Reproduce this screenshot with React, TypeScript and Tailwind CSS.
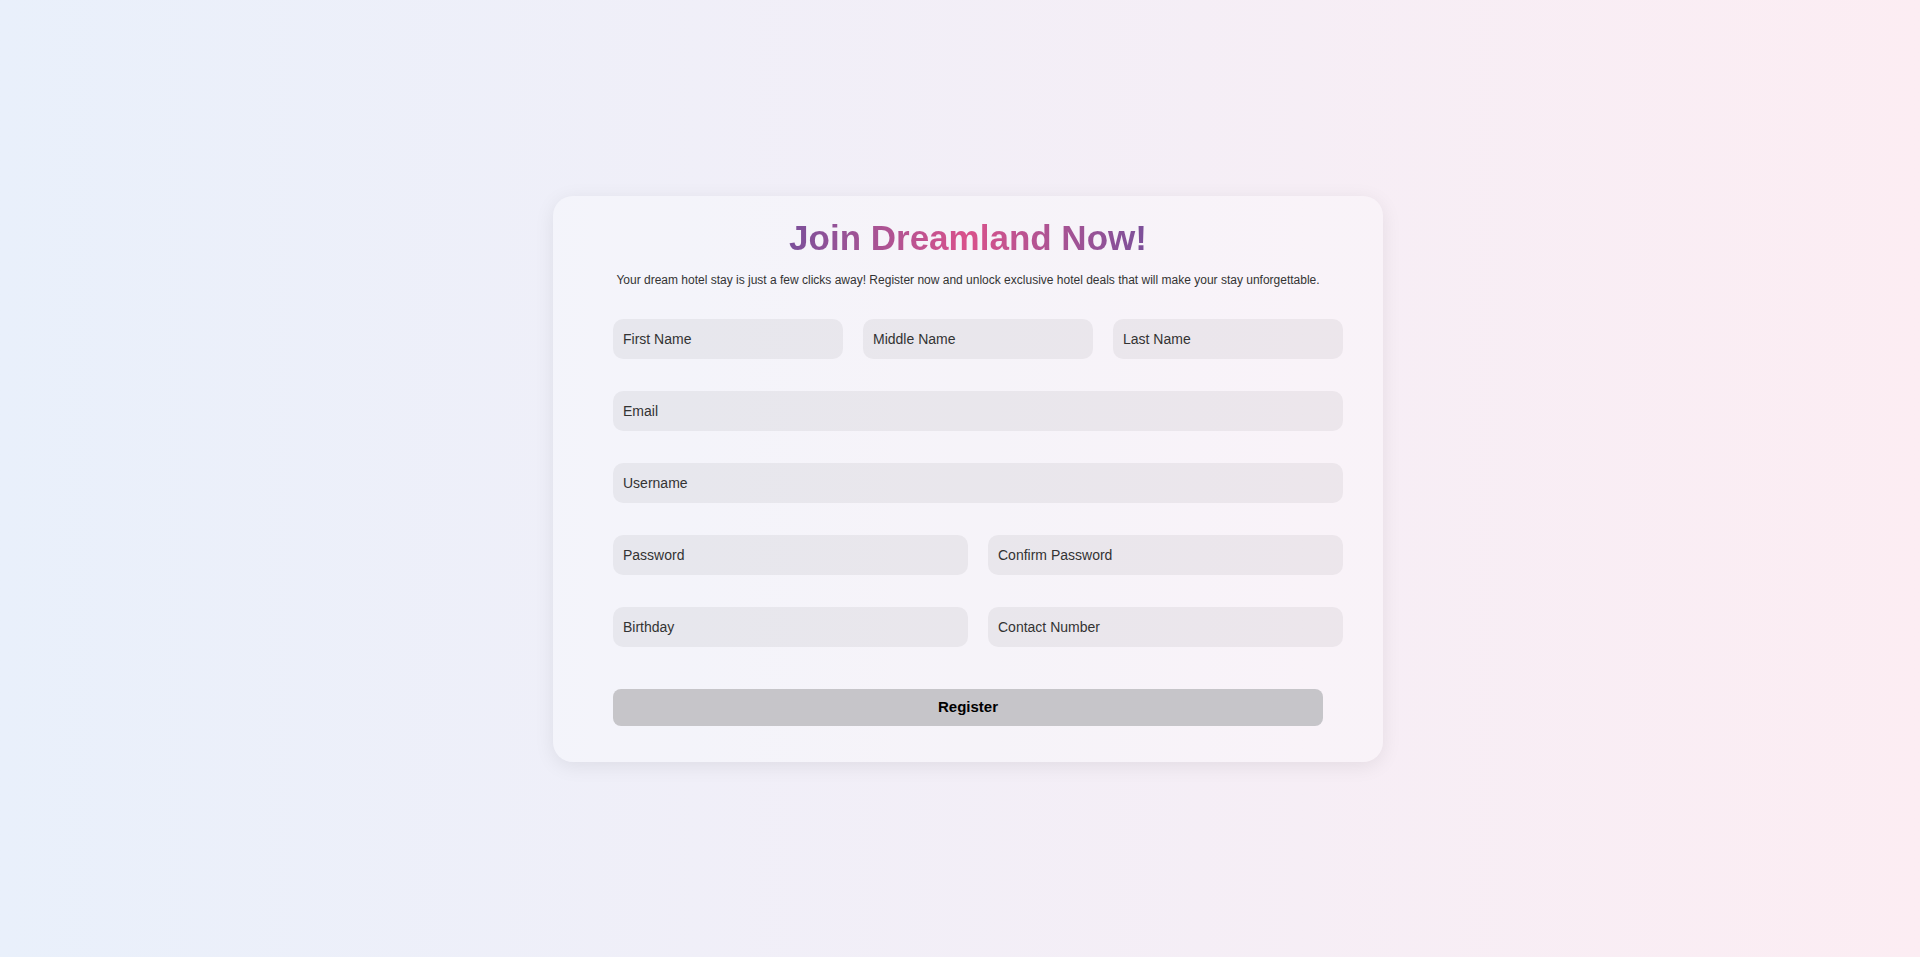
export default function App() {
    const input =
        "h-10 w-full rounded-[10px] bg-black/[0.05] px-[10px] text-[14px] text-[#333] placeholder:text-[#333] outline-none";

    return (
        <div
            className="flex min-h-screen items-center justify-center bg-gradient-to-r from-[#e9f0fb] to-[#fcedf3] pl-4"
            style={{ fontFamily: '"Liberation Sans", Arial, sans-serif' }}
        >
            {/* Card */}
            <div className="w-[830px] rounded-[20px] bg-white/30 pt-[22px] pb-9 shadow-[0_4px_20px_rgba(0,0,0,0.08)]">
                <h1 className="mx-auto w-fit bg-gradient-to-r from-[#7b4f9a] via-[#d9518b] to-[#7b4f9a] bg-clip-text text-center text-[35px] leading-[40px] font-bold text-transparent">
                    Join Dreamland Now!
                </h1>
                <p className="mt-[15px] text-center text-[12px] leading-[14px] text-[#333]">
                    Your dream hotel stay is just a few clicks away! Register now and unlock exclusive hotel deals
                    that will make your stay unforgettable.
                </p>

                <form className="mt-8 pl-[60px] pr-[40px]" onSubmit={(e) => e.preventDefault()}>
                    <div className="flex flex-col gap-8">
                        <div className="grid grid-cols-3 gap-5">
                            <input className={input} placeholder="First Name" />
                            <input className={input} placeholder="Middle Name" />
                            <input className={input} placeholder="Last Name" />
                        </div>
                        <input className={input} placeholder="Email" />
                        <input className={input} placeholder="Username" />
                        <div className="grid grid-cols-2 gap-5">
                            <input className={input} placeholder="Password" type="password" />
                            <input className={input} placeholder="Confirm Password" type="password" />
                        </div>
                        <div className="grid grid-cols-2 gap-5">
                            <input className={input} placeholder="Birthday" />
                            <input className={input} placeholder="Contact Number" />
                        </div>
                    </div>

                    <button
                        type="submit"
                        className="mt-[42px] h-[37px] w-[710px] rounded-lg bg-[#c6c5c9] text-[15px] font-bold text-black"
                    >
                        Register
                    </button>
                </form>
            </div>
        </div>
    );
}
